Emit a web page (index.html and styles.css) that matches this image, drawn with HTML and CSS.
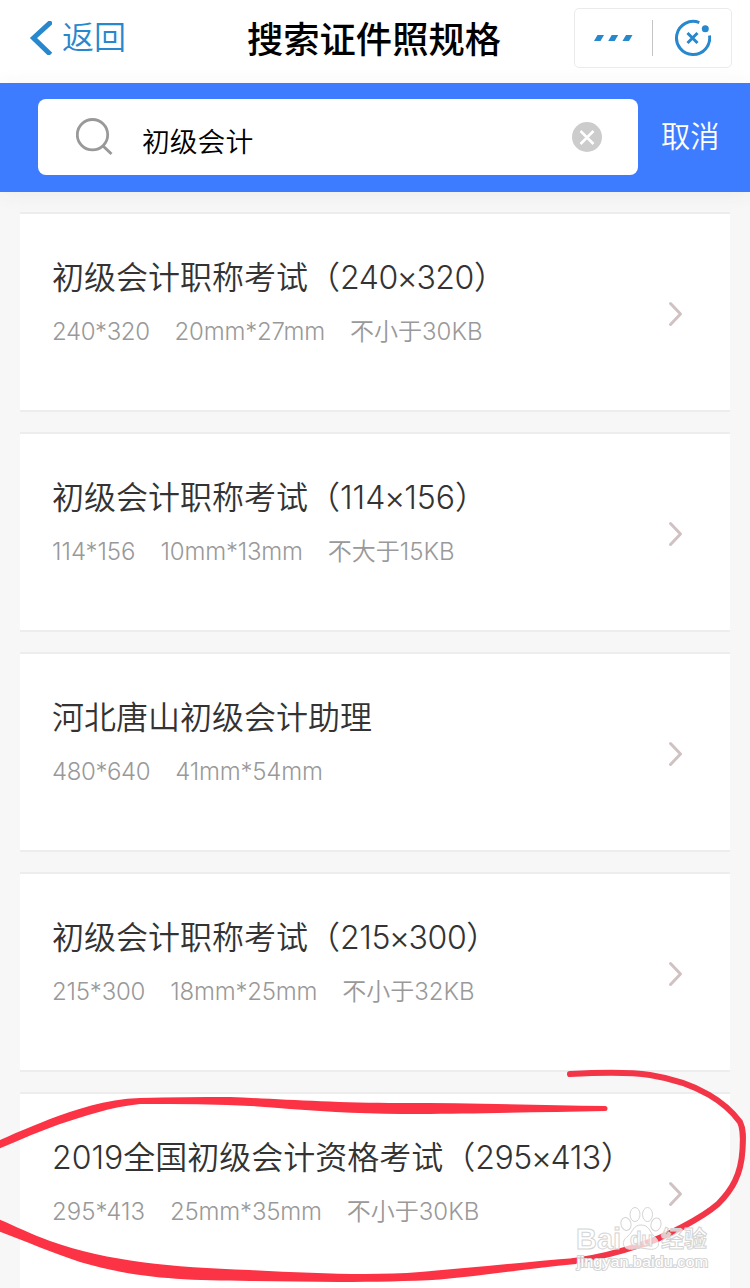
FILE: index.html
```html
<!DOCTYPE html>
<html lang="zh-CN">
<head>
<meta charset="utf-8">
<title>搜索证件照规格</title>
<link rel="stylesheet" href="styles.css">
</head>
<body>
<div class="page">
  <header class="nav">
    <a class="back">
      <svg class="back-icon" width="24" height="34" viewBox="0 0 24 34"><path d="M23.500 .5 5.500 17 22.500 33.500" fill="none" stroke="#2788cd" stroke-width="5"/></svg>
      <span>返回</span>
    </a>
    <h1 class="nav-title">搜索证件照规格</h1>
    <div class="capsule">
      <svg class="dots" width="40" height="8" viewBox="0 0 40 8" fill="#2788cd"><path d="M4.500 1H11L7.500 7H1Z"/><path d="M18.700 1H25.200L21.700 7H15.200Z"/><path d="M33 1H39.500L36 7H29.500Z"/></svg>
      <span class="capsule-line"></span>
      <svg class="close" width="38" height="38" viewBox="0 0 38 38" fill="none" stroke="#2788cd"><path d="M26.300 3.600A16.600 16.600 0 1 0 36.500 16.500" stroke-width="3"/><path d="M14.500 14 24.500 24M24.500 14 14.500 24" stroke-width="3"/><circle cx="32.300" cy="9.800" r="3.500" fill="#2788cd" stroke="none"/></svg>
    </div>
  </header>
  <div class="search">
    <div class="search-box">
      <svg class="search-icon" width="38" height="38" viewBox="0 0 38 38" fill="none" stroke="#999"><circle cx="16.500" cy="16.700" r="15.200" stroke-width="2.800"/><path d="M26.500 27.500 35.500 36" stroke-width="3"/></svg>
      <span class="query">初级会计</span>
      <svg class="clear" width="30" height="30" viewBox="0 0 30 30"><circle cx="15" cy="15" r="15" fill="#ccc"/><path d="M8.500 9 21.500 22M21.500 9 8.500 22" stroke="#fff" stroke-width="2.500"/></svg>
    </div>
    <span class="cancel">取消</span>
  </div>
  <main class="list">
    <section class="card">
      <div class="info"><h2 class="name">初级会计职称考试（<span class="num">240<i>×</i>320</span>）</h2><p class="spec"><span class="px">240*320</span><span class="mm">20mm*27mm</span><span>不小于30KB</span></p></div>
      <svg class="arrow" width="16" height="26" viewBox="0 0 16 26"><path d="M2.500 2.500 12.500 13 2.500 23.500"/></svg>
    </section>
    <section class="card">
      <div class="info"><h2 class="name">初级会计职称考试（<span class="num loose">114<i>×</i>156</span>）</h2><p class="spec"><span class="px loose">114*156</span><span class="mm">10mm*13mm</span><span>不大于15KB</span></p></div>
      <svg class="arrow" width="16" height="26" viewBox="0 0 16 26"><path d="M2.500 2.500 12.500 13 2.500 23.500"/></svg>
    </section>
    <section class="card">
      <div class="info"><h2 class="name">河北唐山初级会计助理</h2><p class="spec"><span class="px">480*640</span><span class="mm">41mm*54mm</span></p></div>
      <svg class="arrow" width="16" height="26" viewBox="0 0 16 26"><path d="M2.500 2.500 12.500 13 2.500 23.500"/></svg>
    </section>
    <section class="card">
      <div class="info"><h2 class="name">初级会计职称考试（<span class="num">215<i>×</i>300</span>）</h2><p class="spec"><span class="px semi">215*300</span><span class="mm">18mm*25mm</span><span>不小于32KB</span></p></div>
      <svg class="arrow" width="16" height="26" viewBox="0 0 16 26"><path d="M2.500 2.500 12.500 13 2.500 23.500"/></svg>
    </section>
    <section class="card">
      <div class="info"><h2 class="name"><span class="num loose">2019</span>全国初级会计资格考试（<span class="num">295<i>×</i>413</span>）</h2><p class="spec"><span class="px loose">295*413</span><span class="mm">25mm*35mm</span><span>不小于30KB</span></p></div>
      <svg class="arrow" width="16" height="26" viewBox="0 0 16 26"><path d="M2.500 2.500 12.500 13 2.500 23.500"/></svg>
    </section>
  </main>
  <svg class="overlay" width="750" height="238" viewBox="0 1050 750 238">
    <g class="pen">
      <path d="M-2 1141C20 1131 35 1125 50 1119C75 1110 105 1099 140 1098C170 1097 200 1097 230 1097C280 1099 330 1103 400 1103C470 1103 540 1105 605 1106A2.500 2.500 0 0 1 605 1111C540 1112 470 1114 420 1114C370 1114 330 1112 290 1109C240 1104 190 1104 140 1104C110 1107 85 1116 60 1124C40 1131 20 1140 -2 1149Z"/>
      <path d="M-2 1219C15 1226 30 1234 50 1241C110 1262 170 1267 250 1270C310 1273 370 1276 420 1272C470 1268 525 1262 576 1258L576 1264C525 1269 480 1276 440 1279.500C380 1283 310 1282 250 1281C180 1280 140 1279 80 1262C50 1252 25 1241 -2 1231Z"/>
      <path class="loop" d="M570 1074C600 1072.500 630 1072 650 1075C700 1083 727 1104 740 1122C744 1130 743 1140 742.500 1150C741 1175 732 1190 718 1204C703 1217 665 1238 640 1245C620 1252 595 1258 574 1261"/>
    </g>
    <g class="watermark">
      <g class="paw">
        <ellipse cx="626" cy="1224" rx="5" ry="6.500" transform="rotate(-15 626 1224)"/>
        <ellipse cx="635" cy="1214.500" rx="5" ry="7"/>
        <ellipse cx="647.500" cy="1214.500" rx="5" ry="7"/>
        <ellipse cx="656" cy="1224.500" rx="5" ry="6.500" transform="rotate(15 656 1224.500)"/>
        <path d="M641 1225C633 1225 633 1232 628 1236C619 1243 624 1251 634 1249Q641 1247 648 1249C659 1251 662 1243 654 1236C649 1231 649 1225 641 1225Z"/>
      </g>
      <text class="brand" x="576" y="1249" textLength="45" lengthAdjust="spacingAndGlyphs">Bai</text>
      <text class="du" x="630" y="1246" textLength="23" lengthAdjust="spacingAndGlyphs">du</text>
      <text class="cn" x="661" y="1247" textLength="46" lengthAdjust="spacingAndGlyphs">经验</text>
      <text class="site" x="577" y="1267" textLength="131" lengthAdjust="spacingAndGlyphs">jingyan.baidu.com</text>
    </g>
  </svg>
</div>
</body>
</html>
```
FILE: styles.css
```css
* { box-sizing: border-box; }
html, body { margin: 0; height: 1288px; overflow: hidden; }
body {
  background: #f7f7f7;
  font-family: Inter, "Noto Sans CJK SC", sans-serif;
  font-weight: 350;
  font-feature-settings: "calt" 0;
}
h1, h2, p { margin: 0; }
svg { display: block; flex: none; }
.page { position: relative; width: 750px; height: 1288px; overflow: hidden; }

.nav {
  display: grid;
  grid-template-columns: 1fr auto 1fr;
  align-items: center;
  height: 83px;
  padding: 0 18px 7px 28px;
  background: #fff;
}
.back { display: flex; align-items: center; gap: 10px; color: #2788cd; font-size: 32px; line-height: 40px; }
.nav-title { color: #000; font: 500 36.300px/50px "Noto Sans CJK SC", sans-serif; margin: 0 12px 2px 0; }
.capsule {
  justify-self: end;
  display: flex;
  align-items: center;
  width: 158px;
  height: 60px;
  padding-left: 18px;
  border: 1px solid #ebebeb;
  border-radius: 5px;
}
.capsule-line { width: 1px; height: 36px; margin: 0 20px 0 19px; background: #c4c4c4; }

.search {
  display: flex;
  align-items: center;
  gap: 23px;
  height: 109px;
  padding: 0 30px 1px 38px;
  background: #3e7cff;
  box-shadow: 0 2px 20px rgba(60, 60, 100, .06);
}
.search-box {
  display: flex;
  align-items: center;
  width: 600px;
  height: 76px;
  padding: 0 36px 0 38px;
  background: #fff;
  border-radius: 8px;
}
.query { flex: 1; margin: 9px 0 0 28px; font-size: 27.800px; line-height: 40px; color: #000; }
.cancel { color: #fff; font-size: 29.300px; line-height: 40px; }

.list { display: flex; flex-direction: column; gap: 20px; padding: 20px 20px 0; }
.card {
  display: flex;
  justify-content: space-between;
  height: 200px;
  flex: none;
  padding: 41px 46px 0 32px;
  background: #fff;
  border: solid #ededed;
  border-width: 2px 0;
}
.name { font-size: 32px; line-height: 46px; color: #333; font-weight: 350; white-space: nowrap; }
.num { letter-spacing: -.4px; }
.num.loose { letter-spacing: 0; }
.num i { font-style: normal; margin: 0 -1px; }
.spec { display: flex; gap: 25px; margin-top: 13px; font-size: 24px; line-height: 36px; color: #999; white-space: nowrap; }
.px { letter-spacing: -.4px; }
.px.semi { letter-spacing: -.2px; }
.px.loose { letter-spacing: 0; }
.mm { letter-spacing: -.2px; }
.arrow { margin-top: 46px; fill: none; stroke: #d0c2c2; stroke-width: 3; stroke-linecap: round; stroke-linejoin: round; }

/* Pen marks and watermark lie over the list */
.overlay { position: absolute; left: 0; bottom: 0; pointer-events: none; }
.pen { fill: #fb3345; }
.loop { fill: none; stroke: #f23648; stroke-width: 6; stroke-linecap: round; }
.watermark { fill: rgba(255, 255, 255, .7); stroke: #d4d4d4; stroke-width: 1; font-family: "Liberation Sans", sans-serif; font-weight: 700; }
.brand { font-size: 30px; }
.du { font-size: 20px; }
.cn { font-family: "Noto Sans CJK SC", sans-serif; font-size: 23px; }
.site { font-size: 15px; stroke-width: 2; paint-order: stroke; fill: #fff; font-weight: 400; }
```
